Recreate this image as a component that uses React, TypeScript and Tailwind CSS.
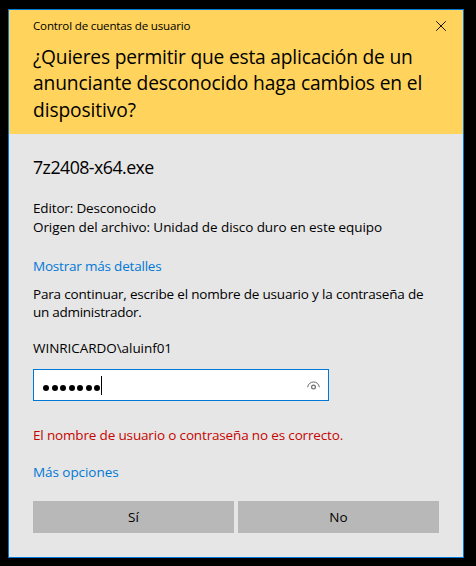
function CloseIcon() {
  return (
    <svg width="10" height="10" viewBox="0 0 10 10" fill="none" stroke="#1a1608" strokeWidth="1">
      <path d="M0.2 0.2L9.8 9.8M9.8 0.2L0.2 9.8" />
    </svg>
  );
}

function RevealIcon() {
  return (
    <svg width="13" height="9" viewBox="0 0 13 9" fill="none" stroke="#6a6a6a" strokeWidth="1">
      <path d="M0.6 6.2C1.2 2.8 3.6 1 6.5 1S11.8 2.8 12.4 6.2" />
      <circle cx="6.5" cy="6.1" r="1.9" strokeWidth="1.2" />
    </svg>
  );
}

function PasswordField() {
  return (
    <div className="mt-[11px] flex h-8 w-[296px] items-center border border-[#0078d7] bg-white pr-2 pl-[9px]">
      <div className="flex gap-[2.5px] pt-[5px]">
        {Array.from({ length: 7 }, (_, i) => (
          <span key={i} className="size-[6px] rounded-full bg-black" />
        ))}
      </div>
      <span className="ml-px h-[19px] w-px bg-black" />
      <button type="button" aria-label="Mostrar contraseña" className="ml-auto">
        <RevealIcon />
      </button>
    </div>
  );
}

export default function App() {
  return (
    <div className="h-[566px] w-[476px] bg-black pt-[9px] pl-2 font-['Open_Sans','Noto_Sans',sans-serif] text-black">
      <div className="h-[549px] w-[456px] border border-[#0078d7] bg-[#e6e6e6] text-[13.5px] leading-5 whitespace-nowrap">
        <header className="h-[124px] bg-[#ffd35c] pl-6">
          <div className="flex items-start justify-between pt-2 pr-[17px]">
            <span className="text-[11.6px] leading-4 tracking-[-0.18px]">Control de cuentas de usuario</span>
            <button type="button" aria-label="Cerrar" className="mt-[3px]">
              <CloseIcon />
            </button>
          </div>
          <h1 className="mt-[10px] text-[19.2px]">
            <span className="block leading-[26px] tracking-[-0.19px]">¿Quieres permitir que esta aplicación de un</span>
            <span className="block leading-[26px] tracking-[-0.13px]">anunciante desconocido haga cambios en el</span>
            <span className="block leading-[28px] tracking-[-0.1px]">dispositivo?</span>
          </h1>
        </header>
        <main className="px-6 pt-5">
          <h2 className="text-[17.8px] leading-[26px] tracking-[-0.55px]">7z2408-x64.exe</h2>
          <p className="mt-[19px] leading-[19px] tracking-[-0.15px]">Editor: Desconocido</p>
          <p className="leading-[19px] tracking-[-0.08px]">Origen del archivo: Unidad de disco duro en este equipo</p>
          <a className="mt-[19px] block tracking-[-0.2px] text-[#0078d7]">Mostrar más detalles</a>
          <p className="mt-[9px] leading-[18px]">
            <span className="block tracking-[-0.18px]">Para continuar, escribe el nombre de usuario y la contraseña de</span>
            <span className="block tracking-[-0.27px]">un administrador.</span>
          </p>
          <p className="mt-[17px] tracking-[-0.05px]">WINRICARDO\aluinf01</p>
          <PasswordField />
          <p className="mt-6 tracking-[-0.157px] text-[#c50500]">El nombre de usuario o contraseña no es correcto.</p>
          <a className="mt-[17px] block tracking-[-0.06px] text-[#0078d7]">Más opciones</a>
          <div className="mt-[19px] flex gap-1">
            <button type="button" className="h-8 w-[201px] bg-[#b8b8b8]">Sí</button>
            <button type="button" className="h-8 w-[201px] bg-[#b8b8b8]">No</button>
          </div>
        </main>
      </div>
    </div>
  );
}
